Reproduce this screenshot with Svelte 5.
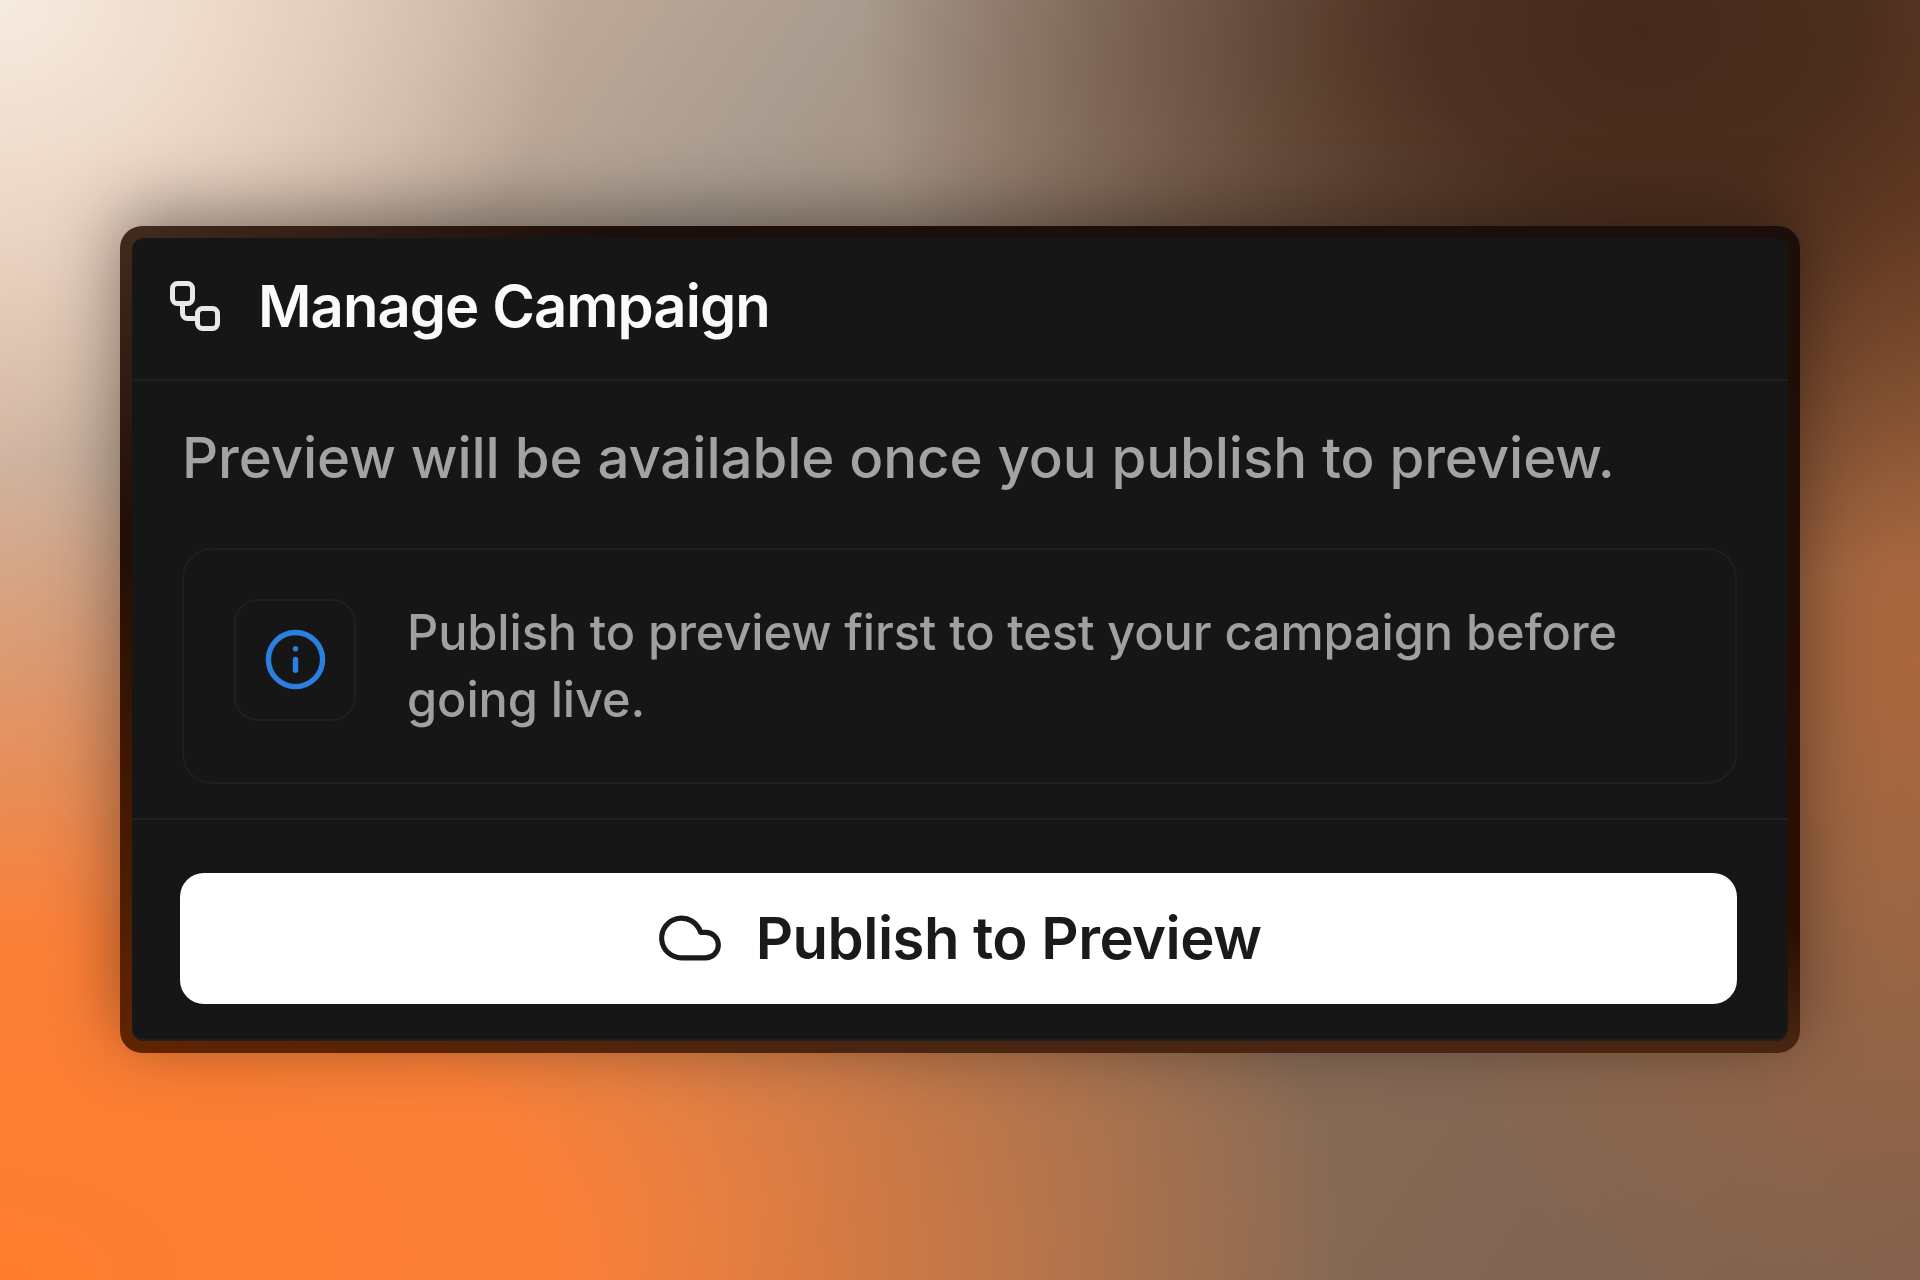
<script>
  const title = 'Manage Campaign'
  const lead = 'Preview will be available once you publish to preview.'
  const note = 'Publish to preview first to test your campaign before going live.'
  const action = 'Publish to Preview'
</script>

<div class="page">
  <div class="frame">
    <div class="card">
      <header class="head">
        <svg class="head-icon" viewBox="0 0 24 24" fill="none" stroke="currentColor" stroke-width="2" stroke-linecap="round" stroke-linejoin="round">
          <rect x="3" y="3" width="8" height="8" rx="2" />
          <path d="M7 11v4a2 2 0 0 0 2 2h4" />
          <rect x="13" y="13" width="8" height="8" rx="2" />
        </svg>
        <h1>{title}</h1>
      </header>

      <section class="body">
        <p class="lead">{lead}</p>
        <div class="note">
          <div class="note-icon">
            <svg viewBox="0 0 24 24" fill="none" stroke="currentColor" stroke-width="2" stroke-linecap="round" stroke-linejoin="round">
              <circle cx="12" cy="12" r="10" />
              <path d="M12 16v-4" />
              <path d="M12 8h.01" />
            </svg>
          </div>
          <p>{note}</p>
        </div>
      </section>

      <footer class="foot">
        <button type="button">
          <svg viewBox="0 0 24 24" fill="none" stroke="currentColor" stroke-width="1.8" stroke-linecap="round" stroke-linejoin="round">
            <path d="M17.5 19H9a7 7 0 1 1 6.71-9h1.79a4.5 4.5 0 1 1 0 9Z" />
          </svg>
          {action}
        </button>
      </footer>
    </div>
  </div>
</div>

<style>
  :global(body) {
    margin: 0;
    background: #000;
  }
  .page {
    box-sizing: border-box;
    width: 1920px;
    height: 1280px;
    padding-bottom: 2px;
    display: grid;
    place-items: center;
    overflow: hidden;
    font-family: Inter, "Liberation Sans", sans-serif;
    background:
      radial-gradient(ellipse 560px 460px at 0 0, #f6ebe0 0%, rgba(243, 226, 212, 0.7) 45%, rgba(240, 220, 200, 0) 100%),
      radial-gradient(ellipse 780px 560px at 1640px 30px, #45291a 0%, rgba(69, 41, 26, 0.9) 28%, rgba(69, 41, 26, 0) 100%),
      radial-gradient(ellipse 1350px 820px at 0 1280px, #ff7d2e 0%, #fb8038 42%, rgba(245, 125, 55, 0) 100%),
      radial-gradient(ellipse 560px 760px at 1920px 660px, #aa663c 0%, rgba(170, 102, 60, 0) 100%),
      radial-gradient(ellipse 420px 420px at 1920px 200px, #8a4c26 0%, rgba(138, 76, 38, 0) 100%),
      linear-gradient(125deg, #e8c4aa 0%, #aa9c90 30%, #8f7058 60%, #7a6050 100%);
  }
  .frame {
    width: 1656px;
    padding: 12px;
    border-radius: 22px;
    background:
      radial-gradient(ellipse 500px 300px at 0 0, rgba(70, 45, 32, 0.9) 0%, rgba(70, 45, 32, 0) 100%),
      radial-gradient(ellipse 800px 500px at 0 100%, #5f2300 0%, rgba(95, 35, 0, 0) 100%),
      linear-gradient(#1c0e0a 0%, #2a0f00 85%, #4a2612 100%);
    box-shadow: 0 -12px 70px rgba(0, 0, 0, 0.42);
  }
  .card {
    background: #161616;
    border-radius: 12px;
    box-shadow: inset 0 -2px 2px #222;
    color: #a3a3a3;
  }
  .head,
  .body,
  .foot {
    filter: blur(0.6px);
  }
  .head {
    display: flex;
    align-items: center;
    gap: 33px;
    box-sizing: border-box;
    height: 143px;
    padding: 0 0 4px 33px;
    border-bottom: 2px solid #1f1f1f;
  }
  .head-icon {
    width: 60px;
    height: 60px;
    color: #e8e8e8;
    flex: none;
  }
  h1 {
    margin: 0;
    font-size: 58px;
    font-weight: 600;
    letter-spacing: -0.95px;
    color: #fafafa;
  }
  .body {
    padding: 42px 51px 34px 50px;
    border-bottom: 2px solid #1f1f1f;
  }
  .lead {
    margin: 0 0 55px;
    font-size: 56.4px;
    font-weight: 450;
    line-height: 70px;
    letter-spacing: -0.1px;
    color: #a3a3a3;
  }
  .note {
    display: flex;
    align-items: flex-start;
    gap: 51px;
    box-sizing: border-box;
    height: 236px;
    padding: 49px 46px 0 50px;
    border: 2px solid #1f1f1f;
    border-radius: 30px;
  }
  .note p {
    margin: 0;
    font-size: 48.7px;
    font-weight: 450;
    line-height: 67px;
    letter-spacing: -0.1px;
    color: #a0a0a0;
  }
  .note-icon {
    flex: none;
    box-sizing: border-box;
    width: 122px;
    height: 122px;
    display: grid;
    place-items: center;
    border: 2px solid #1f1f1f;
    border-radius: 24px;
    color: #2b7fde;
  }
  .note-icon svg {
    width: 65px;
    height: 65px;
  }
  .foot {
    padding: 53px 51px 37px 48px;
  }
  button {
    width: 100%;
    height: 131px;
    display: flex;
    align-items: center;
    justify-content: center;
    gap: 32px;
    padding: 0;
    border: 0;
    border-radius: 24px;
    background: #fff;
    color: #1a1a1a;
    font: 600 58px Inter, "Liberation Sans", sans-serif;
    letter-spacing: -0.52px;
  }
  button svg {
    width: 68px;
    height: 68px;
  }
</style>
